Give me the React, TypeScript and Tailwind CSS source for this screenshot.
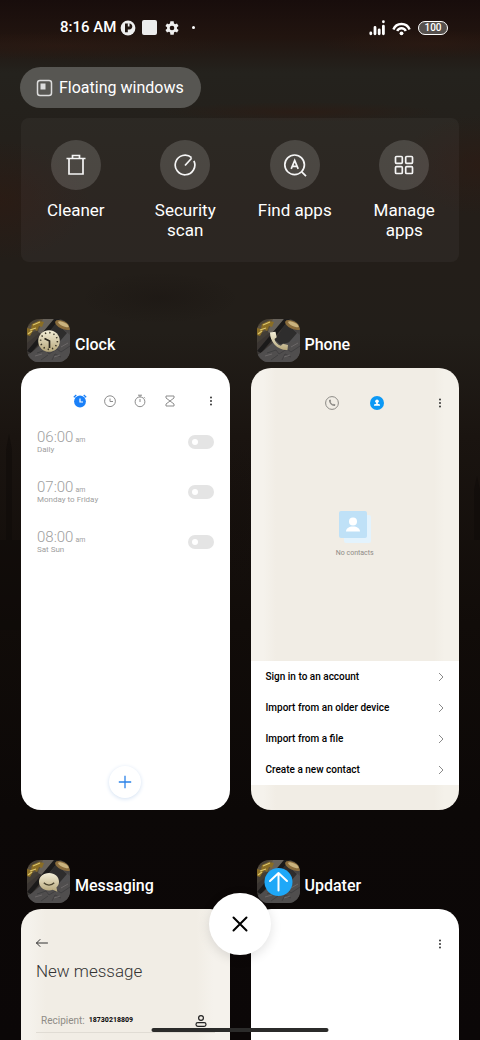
import type { ReactNode } from 'react'

type Glyph = 'clock' | 'phone' | 'message' | 'update'

interface TaskProps {
  name: string
  glyph: Glyph
  className?: string
  children: ReactNode
}

const alarms = [
  { id: 'alarm-6', time: '06:00', repeat: 'Daily' },
  { id: 'alarm-7', time: '07:00', repeat: 'Monday to Friday' },
  { id: 'alarm-8', time: '08:00', repeat: 'Sat Sun' },
]

const contactActions = [
  'Sign in to an account',
  'Import from an older device',
  'Import from a file',
  'Create a new contact',
]

const tools = [
  {
    label: 'Cleaner',
    icon: <path d="M2.500 5.500h19M5 5.500v15.500h14V5.500M8.500 5.500V2.500h7v3" />,
  },
  {
    label: 'Security scan',
    icon: (
      <>
        <path d="M18.600 4.700A9.800 9.800 0 1 0 20.900 7.800" />
        <path d="M12 12.500l6.600-7.300" />
      </>
    ),
  },
  {
    label: 'Find apps',
    icon: (
      <>
        <circle cx="11.600" cy="11.800" r="9.800" />
        <path d="M18.700 18.800l4.300 4.300M8.200 15.800l3.500-8.300 3.500 8.300M9.300 13.300h4.800" />
      </>
    ),
  },
  {
    label: 'Manage apps',
    icon: (
      <>
        <rect x="3.500" y="3.500" width="6.800" height="6.800" rx="1" />
        <rect x="13.700" y="3.500" width="6.800" height="6.800" rx="1" />
        <rect x="3.500" y="13.700" width="6.800" height="6.800" rx="1" />
        <rect x="13.700" y="13.700" width="6.800" height="6.800" rx="1" />
      </>
    ),
  },
]

function Wallpaper() {
  return (
    <svg
      className="absolute inset-0 h-full w-full"
      viewBox="0 0 480 1040"
      preserveAspectRatio="none"
      aria-hidden="true"
    >
      <defs>
        <linearGradient id="sky" x1="0" y1="0" x2="0" y2="1">
          <stop offset="0" stopColor="#180d0c" />
          <stop offset="0.035" stopColor="#21140f" />
          <stop offset="0.07" stopColor="#24221d" />
          <stop offset="0.2" stopColor="#241e19" />
          <stop offset="0.32" stopColor="#221e19" />
          <stop offset="0.42" stopColor="#1a1410" />
          <stop offset="0.6" stopColor="#110c09" />
          <stop offset="0.78" stopColor="#0c0807" />
          <stop offset="1" stopColor="#0b0707" />
        </linearGradient>
        <radialGradient id="ember">
          <stop offset="0" stopColor="#2e1a12" stopOpacity="0.600" />
          <stop offset="1" stopColor="#2e1a12" stopOpacity="0" />
        </radialGradient>
        <radialGradient id="shade">
          <stop offset="0" stopColor="#120c0a" stopOpacity="0.250" />
          <stop offset="1" stopColor="#120c0a" stopOpacity="0" />
        </radialGradient>
      </defs>
      <rect width="480" height="1040" fill="url(#sky)" />
      <ellipse cx="60" cy="46" rx="170" ry="14" fill="url(#ember)" />
      <ellipse cx="430" cy="44" rx="110" ry="14" fill="url(#ember)" />
      <ellipse cx="0" cy="200" rx="90" ry="60" fill="url(#ember)" />
      <ellipse cx="480" cy="165" rx="80" ry="50" fill="url(#ember)" />
      <ellipse cx="300" cy="112" rx="140" ry="10" fill="url(#ember)" />
      <ellipse cx="160" cy="298" rx="80" ry="26" fill="url(#shade)" />
      <ellipse cx="240" cy="520" rx="30" ry="80" fill="url(#shade)" />
      <g fill="#0e0908" opacity="0.500">
        <path d="M6 540v-90l3-16 3 16v90h8v90H0v-90zM474 540v-50l3-14 3 14v50z" />
      </g>
    </svg>
  )
}

function GlyphArt({ glyph }: { glyph: Glyph }) {
  if (glyph === 'clock') {
    return (
      <g>
        <circle cx="22" cy="22" r="10.800" fill="url(#cream)" />
        <circle
          cx="22"
          cy="22"
          r="8.400"
          fill="none"
          stroke="#3a3527"
          strokeWidth="1.600"
          strokeDasharray="1.300 3.098"
        />
        <path d="M17.500 19.500l5 2.500v7" fill="none" stroke="#29251c" strokeWidth="1.700" />
      </g>
    )
  }
  if (glyph === 'phone') {
    return (
      <path
        d="M13 13.500l5.500-.800 1.200 5.500-2.200 1.800c.600 3 3 5.600 6.300 6.800l2.200-2 5 1.200-.500 5c-9.600.600-17.800-8-17.500-17.500z"
        fill="url(#cream)"
      />
    )
  }
  if (glyph === 'message') {
    return (
      <g>
        <path
          d="M22 13c5.800 0 10 3.800 10 8.700 0 2.300-.900 4.200-2.600 5.800l1 4.300-4.600-2.100c-1.200.500-2.500.700-3.800.700-5.800 0-10-3.900-10-8.700S16.200 13 22 13z"
          fill="url(#cream)"
        />
        <path d="M16.800 22.800c2.600 3 7.800 3 10.400 0" fill="none" stroke="#4a442f" strokeWidth="1.300" />
      </g>
    )
  }
  return (
    <g>
      <circle cx="21.500" cy="22" r="14" fill="#1fa8f8" />
      <path
        d="M21.500 30.500v-17M13 21l8.500-8 8.500 8"
        fill="none"
        stroke="#fff"
        strokeWidth="2"
        strokeLinecap="round"
        strokeLinejoin="round"
      />
    </g>
  )
}

function AppIcon({ glyph }: { glyph: Glyph }) {
  return (
    <svg className="h-[43px] w-[43px] shrink-0 rounded-xl" viewBox="0 0 43 43" aria-hidden="true">
      <defs>
        <linearGradient id="stone" x1="0" y1="0" x2="1" y2="1">
          <stop offset="0" stopColor="#4f4636" />
          <stop offset="0.450" stopColor="#3a3837" />
          <stop offset="1" stopColor="#5b5958" />
        </linearGradient>
        <linearGradient id="cream" x1="0" y1="0" x2="0" y2="1">
          <stop offset="0" stopColor="#f4efd9" />
          <stop offset="1" stopColor="#b5a679" />
        </linearGradient>
      </defs>
      <rect width="43" height="43" fill="url(#stone)" />
      <path d="M0 24L19 9l6 12L8 36 0 32z" fill="#3a3532" />
      <path d="M0 16q7-5 15-4l8-12h-9L0 8z" fill="#5c5240" />
      <path d="M16 0h11L15 15l-4-2z" fill="#67625b" />
      <path d="M27 0h6L4 34l-4-2z" fill="#1b1a1a" />
      <path d="M34 8l9 8v5L20 35l-8 8H5l-1-9z" fill="#504f50" />
      <path d="M29 4l11 10-13 15-9-8z" fill="#2e2d2d" />
      <path d="M0 43v-7l16-9 27-6v22z" fill="#504e4e" />
      <path d="M10 34l9-3 3 4 8-5 4 3 9-6M14 41l7-5M25 41l3-6 6 3" fill="none" stroke="#403f40" />
      <path d="M8 37l7-2M27 38l6-2M34 28l7-4" fill="none" stroke="#777372" strokeWidth="0.700" />
      <path d="M5 5l7-3 5 1-2 5-3-1-2 5-3-2-4 7-3-1v-7l4 1z" fill="#8a6d24" />
      <path d="M6 6l7-3M3 11l6-2M1 15l4-3" stroke="#d9c36a" strokeWidth="1.300" />
      <ellipse cx="36" cy="6" rx="8.500" ry="3.900" transform="rotate(25 36 6)" fill="#8a6c3c" />
      <ellipse cx="36.500" cy="5" rx="5.800" ry="2" transform="rotate(25 36 5)" fill="#c9b27e" />
      <GlyphArt glyph={glyph} />
    </svg>
  )
}

function Task({ name, glyph, className = 'bg-white', children }: TaskProps) {
  return (
    <section>
      <header className="flex h-[43px] items-center gap-[5px] pl-[6px]">
        <AppIcon glyph={glyph} />
        <h2 className="pt-2 text-base leading-5 font-medium text-white">{name}</h2>
      </header>
      <div
        className={`mt-[6px] flex aspect-[208/441] flex-col overflow-hidden rounded-[20px] ${className}`}
      >
        {children}
      </div>
    </section>
  )
}

function MoreButton() {
  return (
    <button type="button" aria-label="More options" className="mr-4 justify-self-end">
      <svg className="h-3 w-[6px]" viewBox="0 0 6 12" fill="#222">
        <circle cx="3" cy="2.500" r="0.900" />
        <circle cx="3" cy="6" r="0.900" />
        <circle cx="3" cy="9.500" r="0.900" />
      </svg>
    </button>
  )
}

function ClockTask() {
  return (
    <Task name="Clock" glyph="clock">
      <div className="grid h-[61px] shrink-0 grid-cols-[1fr_auto_1fr] items-center pt-1">
        <span />
        <div className="flex gap-4">
          <button type="button" aria-label="Alarm">
            <svg className="h-[14px] w-[14px]" viewBox="0 0 14 14" fill="none">
              <circle cx="7" cy="7.500" r="5.900" fill="#1a80f8" />
              <path d="M.8 3.200L3.300 1M13.200 3.200L10.700 1" stroke="#1a80f8" strokeWidth="1.300" />
              <path d="M7 4.500V8h3" stroke="#fff" strokeWidth="1.200" />
            </svg>
          </button>
          <button type="button" aria-label="World clock">
            <svg className="h-[14px] w-[14px]" viewBox="0 0 14 14" fill="none" stroke="#8c8c8c">
              <circle cx="7" cy="7.200" r="5.400" />
              <path d="M7 4.500v3h3" />
            </svg>
          </button>
          <button type="button" aria-label="Stopwatch">
            <svg className="h-[14px] w-[14px]" viewBox="0 0 14 14" fill="none" stroke="#8c8c8c">
              <circle cx="7" cy="7.800" r="4.900" />
              <path d="M5 1.200h4M7 1.200v2M7 5v3M11 3.200l1 1" />
            </svg>
          </button>
          <button type="button" aria-label="Timer">
            <svg className="h-[14px] w-[14px]" viewBox="0 0 14 14" fill="none" stroke="#8c8c8c">
              <path d="M3 2h8v2L3 10v2h8v-2L3 4z" strokeLinejoin="round" />
            </svg>
          </button>
        </div>
        <MoreButton />
      </div>
      <ul className="flex-1 px-4">
        {alarms.map(({ id, time, repeat }) => (
          <li key={id} className="flex h-[50px] items-start justify-between">
            <label htmlFor={id} className="text-[#a0a0a0]">
              <span className="flex items-baseline gap-[2px] text-[15px] leading-4 font-light">
                {time}
                <span className="text-[7px] leading-[7px] font-normal">am</span>
              </span>
              <span className="block text-[8px] leading-[9px]">{repeat}</span>
            </label>
            <input
              id={id}
              type="checkbox"
              className="relative mt-[6px] h-[14px] w-[26px] appearance-none rounded-full bg-[#e4e4e4] before:absolute before:top-1 before:left-1 before:h-[6px] before:w-[6px] before:rounded-full before:bg-white checked:bg-[#1a80f8] checked:before:left-4"
            />
          </li>
        ))}
      </ul>
      <button
        type="button"
        aria-label="Add alarm"
        className="mb-3 flex h-8 w-8 items-center justify-center self-center rounded-full bg-white shadow-[0_1px_4px_#d3e1f3]"
      >
        <svg className="h-[14px] w-[14px]" viewBox="0 0 14 14" stroke="#2b82e8" strokeWidth="1.300">
          <path d="M7 .8v12.400M.8 7h12.400" />
        </svg>
      </button>
    </Task>
  )
}

function PhoneTask() {
  return (
    <Task
      name="Phone"
      glyph="phone"
      className="bg-[linear-gradient(90deg,#f5f2ec_6%,#f1ede5_12%,#f1ede5_88%,#f4f1ea_93%)]"
    >
      <div className="grid h-[70px] shrink-0 grid-cols-[1fr_auto_1fr] items-center">
        <span />
        <div className="flex gap-[31px]">
          <button type="button" aria-label="Recents">
            <svg className="h-[14px] w-[14px]" viewBox="0 0 14 14" fill="none">
              <circle cx="7" cy="7" r="6.400" stroke="#8c8a86" />
              <path
                d="M4 4l1.500-.5.700 1.700-.6.600c.4 1.200 1.200 2 2.500 2.600l.6-.7 1.700.7-.4 1.500C7 10.500 3.600 7 4 4z"
                fill="#8c8a86"
              />
            </svg>
          </button>
          <button type="button" aria-label="Contacts">
            <svg className="h-[14px] w-[14px]" viewBox="0 0 14 14">
              <circle cx="7" cy="7" r="7" fill="#0d99f5" />
              <circle cx="7" cy="5.300" r="1.800" fill="#fff" />
              <path d="M6.200 6h1.600v1.800l2.200.8v1.200H4V8.600l2.200-.8z" fill="#fff" />
            </svg>
          </button>
        </div>
        <MoreButton />
      </div>
      <div className="flex flex-1 flex-col items-center justify-center pb-[30px]">
        <svg className="h-8 w-8" viewBox="0 0 32 32" aria-hidden="true">
          <rect x="5" y="4" width="27" height="28" rx="2" fill="#e3f3fd" />
          <rect x="0" y="0" width="28" height="27" rx="2" fill="#bfe1f7" />
          <circle cx="14" cy="10.500" r="4" fill="#fff" />
          <path d="M7 20.500c0-3 3-5 7-5s7 2 7 5z" fill="#fff" />
        </svg>
        <p className="mt-1 text-[7px] leading-3 text-[#8f8b85]">No contacts</p>
      </div>
      <ul className="mb-[25px] bg-white">
        {contactActions.map((action) => (
          <li key={action}>
            <button
              type="button"
              className="flex h-[31px] w-full items-center justify-between pr-[14px] pl-[15px] text-[10px] font-medium text-black"
            >
              {action}
              <svg className="h-[10px] w-2" viewBox="0 0 8 10" fill="none" stroke="#8a8a8a">
                <path d="M2 1l4 4-4 4" />
              </svg>
            </button>
          </li>
        ))}
      </ul>
    </Task>
  )
}

function MessagingTask() {
  return (
    <Task
      name="Messaging"
      glyph="message"
      className="bg-[linear-gradient(90deg,#f5f2ec_4%,#f1ede5_12%,#f1ede5_84%,#f5f2ec_92%)]"
    >
      <button type="button" aria-label="Back" className="mt-7 ml-[15px] w-3">
        <svg
          className="h-3 w-3"
          viewBox="0 0 12 12"
          fill="none"
          stroke="#333"
          strokeLinecap="round"
          strokeLinejoin="round"
        >
          <path d="M11.500 6h-11M4 2.500L.5 6 4 9.500" />
        </svg>
      </button>
      <h3 className="mt-3 ml-[15px] text-[17px] leading-5 font-light text-[#333]">New message</h3>
      <div className="mx-[15px] mt-7 flex h-6 items-center border-b border-[#e0dcd4] pr-2 pl-[5px]">
        <label htmlFor="recipient" className="text-[10px] text-[#8f8c86]">
          Recipient:
        </label>
        <input
          id="recipient"
          type="tel"
          defaultValue="18730218809"
          className="ml-1 w-0 flex-1 text-[7px] font-extrabold text-[#111] outline-none"
        />
        <button type="button" aria-label="Pick contact">
          <svg className="h-3 w-3" viewBox="0 0 12 12" fill="none" stroke="#222" strokeWidth="1.200">
            <circle cx="6" cy="3" r="2.400" />
            <rect x="1" y="7.600" width="10" height="3.700" rx="1.800" />
          </svg>
        </button>
      </div>
    </Task>
  )
}

function StatusBar() {
  return (
    <div className="flex h-[55px] items-center justify-between pr-8 pl-[60px] text-white">
      <div className="flex items-center">
        <time className="text-[15px] font-medium">8:16 AM</time>
        <svg className="ml-1 h-4 w-4" viewBox="0 0 16 16">
          <circle cx="8" cy="8" r="7.400" fill="#eee" />
          <path d="M5 3.500v8.800h2.800V9.500h1.500c4 0 4-6 0-6z" fill="#211712" />
          <path d="M7.800 3.200h1.700v3.300H7.800z" fill="#eee" />
        </svg>
        <span className="ml-[6px] h-[15px] w-[15px] rounded-[2px] bg-[#ececec]" />
        <svg className="ml-[7px] h-4 w-4" viewBox="0 0 24 24" fill="#eee">
          <path d="M19.400 13a7.500 7.500 0 0 0 0-2l2.400-1.900-2.300-4-2.900 1.100a7.500 7.500 0 0 0-1.700-1L14.500 2h-5l-.5 3.200a7.500 7.500 0 0 0-1.700 1L4.500 5.100l-2.300 4L4.600 11a7.500 7.500 0 0 0 0 2l-2.400 1.900 2.300 4 2.900-1.100a7.500 7.500 0 0 0 1.700 1l.5 3.200h5l.4-3.200a7.500 7.500 0 0 0 1.700-1l2.900 1.100 2.300-4zM12 15.500a3.500 3.500 0 1 1 0-7 3.500 3.500 0 0 1 0 7z" />
        </svg>
        <span className="ml-3 h-[3px] w-[3px] rounded-full bg-white" />
      </div>
      <div className="flex items-center gap-[7px]">
        <svg
          className="h-4 w-4"
          viewBox="0 0 16 16"
          stroke="#fff"
          strokeWidth="2.800"
          strokeLinecap="round"
        >
          <path d="M1.800 13v.8M6 7.500v6.300M10.200 9.800v4M14.400 6.200v7.600M14.400 1.700v.1" />
        </svg>
        <svg className="h-4 w-[19px]" viewBox="0 0 19 16" fill="none" stroke="#fff" strokeWidth="2.400">
          <path d="M1.400 9.500A8.700 8.700 0 0 1 17.600 9.500" />
          <path d="M5.200 11a4.700 4.700 0 0 1 8.600 0" />
          <circle cx="9.500" cy="13.300" r="1.900" fill="#fff" stroke="none" />
        </svg>
        <span className="flex h-[14px] w-[30px] items-center justify-center rounded-full border border-white bg-[#55504d] text-[10px] leading-3 font-medium">
          100
        </span>
      </div>
    </div>
  )
}

export default function App() {
  return (
    <main className="relative h-screen overflow-hidden bg-[#0c0807] font-['Roboto',sans-serif]">
      <Wallpaper />
      <div className="relative">
        <StatusBar />

        {/* Shortcuts */}
        <button
          type="button"
          className="mt-3 ml-5 flex h-[41px] items-center gap-[6px] rounded-full bg-[#575652] pr-[17px] pl-4 text-base text-white"
        >
          <svg className="h-[18px] w-[17px]" viewBox="0 0 17 18" fill="none" stroke="#ddd">
            <rect x="1.500" y="1.500" width="14" height="15" rx="2.500" strokeWidth="1.500" />
            <rect x="5" y="5" width="4" height="5" fill="#ddd" />
          </svg>
          Floating windows
        </button>
        <div className="mx-[21px] mt-[10px] grid h-36 grid-cols-4 rounded-lg bg-white/4 pt-[22px]">
          {tools.map(({ label, icon }) => (
            <button
              key={label}
              type="button"
              className="flex flex-col items-center gap-[10px] px-4 text-[17px] leading-5 text-white"
            >
              <span className="flex h-[50px] w-[50px] shrink-0 items-center justify-center rounded-full bg-white/15">
                <svg
                  className="h-6 w-6"
                  viewBox="0 0 24 24"
                  fill="none"
                  stroke="#f5f5f5"
                  strokeWidth="1.700"
                >
                  {icon}
                </svg>
              </span>
              {label}
            </button>
          ))}
        </div>

        {/* Recent tasks */}
        <div className="mx-[21px] mt-[57px] grid grid-cols-2 gap-x-[21px] gap-y-[50px]">
          <ClockTask />
          <PhoneTask />
          <MessagingTask />
          <Task name="Updater" glyph="update">
            <div className="grid h-[70px] items-center">
              <MoreButton />
            </div>
          </Task>
        </div>
      </div>

      <button
        type="button"
        aria-label="Close all"
        className="absolute bottom-[85px] left-1/2 flex h-[62px] w-[62px] -translate-x-1/2 items-center justify-center rounded-full bg-white shadow-[0_3px_12px_rgba(0,0,0,0.12)]"
      >
        <svg
          className="h-4 w-4"
          viewBox="0 0 16 16"
          stroke="#000"
          strokeWidth="2"
          strokeLinecap="round"
        >
          <path d="M1.500 1.500l13 13M14.500 1.500l-13 13" />
        </svg>
      </button>
      <div className="absolute bottom-2 left-1/2 h-1 w-[177px] -translate-x-1/2 rounded-full bg-[#2b2b2a]" />
    </main>
  )
}
